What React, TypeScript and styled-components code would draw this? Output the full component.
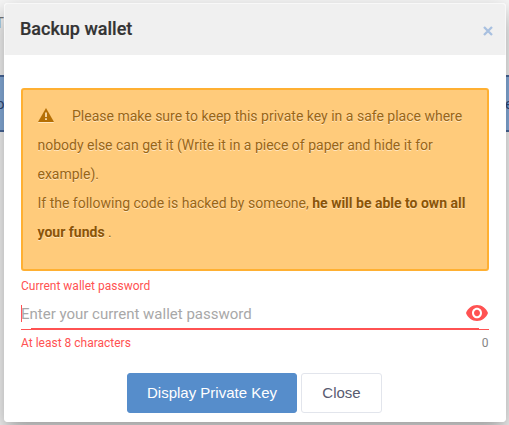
import React from "react";
import styled, { createGlobalStyle } from "styled-components";

const GlobalStyle = createGlobalStyle`
  * { box-sizing: border-box; }
  html, body { margin: 0; height: 100%; overflow: hidden; background: #f6f6f6; }
  body { font-family: Roboto, "Liberation Sans", sans-serif; }
`;

const Page = styled.div`
  position: relative;
  width: 509px;
  height: 425px;
  overflow: hidden;
  background: #f6f6f6;
`;

const Backdrop = styled.div`
  position: absolute;
  inset: 0;
  display: flex;
  flex-direction: column;
  padding-top: 75px;
`;

const BackdropHeading = styled.span`
  position: absolute;
  left: -5px;
  top: 14px;
  font-size: 15px;
  color: #777;
`;

const BackdropBand = styled.div`
  display: flex;
  align-items: center;
  justify-content: space-between;
  height: 57px;
  margin: 0 -4px;
  border: solid #49699c;
  border-width: 2px 0;
  background: #88aedd;
  color: #2f4a78;
  font-size: 15px;
`;

const Modal = styled.section`
  position: relative;
  width: 502px;
  height: 419px;
  margin: 3px 0 0 4px;
  overflow: hidden;
  border-radius: 4px;
  background: #fff;
`;

const Shade = styled.div`
  position: absolute;
  left: 4px;
  top: 3px;
  width: 502px;
  height: 419px;
  border-radius: 4px;
  box-shadow: 0 10px 22px rgba(0, 0, 0, 0.37);
`;

const Header = styled.header`
  display: flex;
  align-items: center;
  justify-content: space-between;
  height: 52px;
  padding: 0 12px 0 15px;
  border: 1px solid #f8f8f8;
  border-bottom: 0;
  border-radius: 4px 4px 0 0;
  background: #f0f0f0;
`;

const Title = styled.h1`
  margin: 0 0 2px;
  font-size: 18px;
  font-weight: 500;
  line-height: 24px;
  color: #333;
  -webkit-text-stroke: 0.2px #333;
`;

const Dismiss = styled.button`
  display: flex;
  padding: 2px 0 0;
  border: 0;
  background: none;
`;

const Body = styled.div`
  padding: 33px 17px 0;
`;

const Alert = styled.div`
  height: 183px;
  padding: 12px 14px;
  border: 2px solid #ffb032;
  border-radius: 3px;
  background: #ffcb7b;
  color: #996515;
  font-size: 14px;
  line-height: 29px;
  white-space: nowrap;
  text-shadow: 0 1px 0 rgba(255, 255, 255, 0.5);

  svg { margin-right: 18.5px; vertical-align: -1px; filter: drop-shadow(0 1px 0 rgba(255, 255, 255, 0.5)); }
  strong { font-weight: 700; color: #8a5407; }
`;

const AlertText = styled.div`
  padding-left: 0.5px;
`;

const Label = styled.label`
  display: block;
  margin-top: 7px;
  font-size: 12px;
  line-height: 16px;
  color: #ff5252;
`;

const Field = styled.div`
  display: flex;
  align-items: center;
  justify-content: space-between;
  height: 34px;
  padding-right: 1px;

  svg { margin-top: 3px; }
`;

const Placeholder = styled.span`
  display: flex;
  align-items: center;
  height: 17px;
  margin-top: 5px;
  box-shadow: inset 1px 0 #ff5252;
  font-size: 15px;
  color: #a8a8a8;
  white-space: nowrap;
`;

const Underline = styled.div`
  height: 2px;
  border-bottom: 1px solid #ff5252;

  &::before {
    content: "";
    display: block;
    height: 2px;
    margin: 0 10px;
    background: #ff5252;
  }
`;

const Details = styled.div`
  display: flex;
  justify-content: space-between;
  margin-top: 6px;
  padding-right: 0.5px;
  font-size: 12px;
  line-height: 14px;
  color: #ff5252;
`;

const Counter = styled.span`
  color: #858585;
`;

const Actions = styled.footer`
  display: flex;
  gap: 4px;
  margin: 23px 0 0 106px;
`;

const Button = styled.button<{ $primary?: boolean }>`
  width: ${(p) => (p.$primary ? 170 : 81)}px;
  height: 40px;
  padding: 0;
  border: 1px solid ${(p) => (p.$primary ? "#568dcb" : "#e2e5ec")};
  border-radius: 3px;
  background: ${(p) => (p.$primary ? "#568dcb" : "#fff")};
  color: ${(p) => (p.$primary ? "#fff" : "#585b70")};
  font-family: "Liberation Sans", sans-serif;
  font-size: 15px;
  line-height: 38px;
  white-space: nowrap;
`;

export default function App() {
  return (
    <Page>
      <GlobalStyle />
      <Backdrop>
        <BackdropHeading>T</BackdropHeading>
        <BackdropBand><span>o</span><span>e</span></BackdropBand>
      </Backdrop>
      <Shade />
      <Modal>
        <Header>
          <Title>Backup wallet</Title>
          <Dismiss aria-label="Close dialog">
            <svg width="10" height="10" viewBox="0 0 10 10">
              <path d="M1 1l8 8M9 1L1 9" stroke="#a8c0e0" strokeWidth="2.3" />
            </svg>
          </Dismiss>
        </Header>
        <Body>
          <Alert>
            <AlertText>
              <svg width="16" height="14" viewBox="0 0 16 14">
                <path d="M8 0l8 14H0z" fill="#b56f04" />
                <path d="M7 4.5h2V9H7zM7 10.2h2V12H7z" fill="#f3d39f" />
              </svg>
              Please make sure to keep this private key in a safe place where<br />
              nobody else can get it (Write it in a piece of paper and hide it for<br />
              example).<br />
              If the following code is hacked by someone, <strong>he will be able to own all<br />
              your funds</strong> .
            </AlertText>
          </Alert>
          <Label>Current wallet password</Label>
          <Field>
            <Placeholder>Enter your current wallet password</Placeholder>
            <svg width="22" height="16" viewBox="1 4.5 22 15" preserveAspectRatio="none">
              <path fill="#ff5252" d="M12 4.5C7 4.5 2.73 7.61 1 12c1.73 4.39 6 7.5 11 7.5s9.27-3.11 11-7.5c-1.73-4.39-6-7.5-11-7.5zM12 17c-2.76 0-5-2.24-5-5s2.24-5 5-5 5 2.24 5 5-2.24 5-5 5zm0-8c-1.66 0-3 1.34-3 3s1.34 3 3 3 3-1.34 3-3-1.34-3-3-3z" />
            </svg>
          </Field>
          <Underline />
          <Details><span>At least 8 characters</span><Counter>0</Counter></Details>
          <Actions>
            <Button $primary>Display Private Key</Button>
            <Button>Close</Button>
          </Actions>
        </Body>
      </Modal>
    </Page>
  );
}
